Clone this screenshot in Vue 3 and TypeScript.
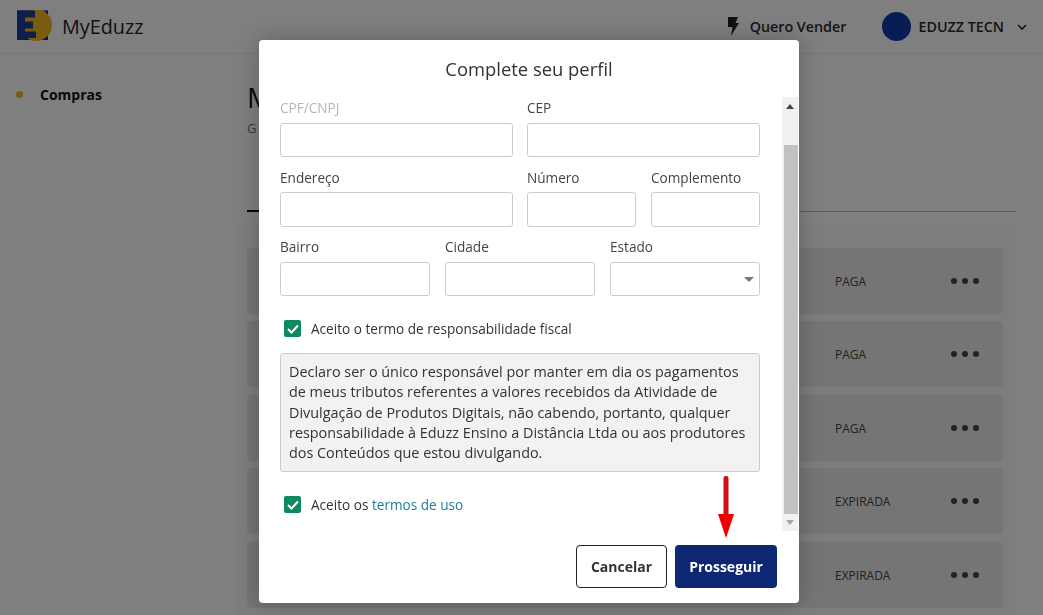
<script setup lang="ts">
interface Purchase {
  id: number
  status: string
}

const purchases: Purchase[] = [
  { id: 1, status: 'PAGA' },
  { id: 2, status: 'PAGA' },
  { id: 3, status: 'PAGA' },
  { id: 4, status: 'EXPIRADA' },
  { id: 5, status: 'EXPIRADA' },
]

const declaration =
  'Declaro ser o único responsável por manter em dia os pagamentos de meus tributos referentes a valores recebidos da Atividade de Divulgação de Produtos Digitais, não cabendo, portanto, qualquer responsabilidade à Eduzz Ensino a Distância Ltda ou aos produtores dos Conteúdos que estou divulgando.'
</script>

<template>
  <div class="page">
    <header class="topbar">
      <div class="brand">
        <svg class="logo" width="36" height="33" viewBox="0 0 36 33">
          <rect x="0" y="0.500" width="31" height="29.500" fill="#0f2a80" />
          <circle cx="19" cy="15" r="16" fill="#f3b81c" />
          <path d="M0 .5h18v7H8v4h8v7H8v3h11v6.500H8V30H0z" fill="#1c3a9c" />
        </svg>
        <span class="brand-name">MyEduzz</span>
      </div>
      <div class="top-actions">
        <div class="sell">
          <svg width="12" height="19" viewBox="0 0 12 19">
            <path d="M1 0h10L8.500 6H12L4 19l1.500-9H1z" fill="#222" />
          </svg>
          <span>Quero Vender</span>
        </div>
        <div class="account">
          <span class="avatar"></span>
          <span class="account-name">EDUZZ TECN</span>
          <svg width="10" height="6" viewBox="0 0 10 6">
            <path d="M1 1l4 4 4-4" fill="none" stroke="#222" stroke-width="1.500" />
          </svg>
        </div>
      </div>
    </header>

    <div class="content">
      <aside class="sidebar">
        <div class="nav-item">
          <span class="nav-dot"></span>
          <span>Compras</span>
        </div>
      </aside>
      <main class="main">
        <h1 class="main-title">M</h1>
        <p class="main-sub">G</p>
        <div class="tabs"><span class="tab-active"></span></div>
        <section class="panel">
          <div v-for="item in purchases" :key="item.id" class="row">
            <span class="row-status">{{ item.status }}</span>
            <span class="row-menu"><i></i><i></i><i></i></span>
          </div>
        </section>
      </main>
    </div>

    <div class="overlay">
      <div class="modal">
        <h2 class="modal-title">Complete seu perfil</h2>

        <div class="modal-body">
          <form class="form">
            <div class="form-row first">
              <label class="field disabled">
                <span>CPF/CNPJ</span>
                <input type="text" />
              </label>
              <label class="field">
                <span>CEP</span>
                <input type="text" />
              </label>
            </div>
            <div class="form-row second">
              <label class="field">
                <span>Endereço</span>
                <input type="text" />
              </label>
              <div class="form-pair">
                <label class="field">
                  <span>Número</span>
                  <input type="text" />
                </label>
                <label class="field">
                  <span>Complemento</span>
                  <input type="text" />
                </label>
              </div>
            </div>
            <div class="form-row thirds">
              <label class="field">
                <span>Bairro</span>
                <input type="text" />
              </label>
              <label class="field">
                <span>Cidade</span>
                <input type="text" />
              </label>
              <label class="field">
                <span>Estado</span>
                <div class="select"><b></b></div>
              </label>
            </div>

            <div class="check check-first">
              <span class="box">
                <svg width="12" height="10" viewBox="0 0 12 10">
                  <path d="M1 5l3.500 3.500L11 1.500" fill="none" stroke="#fff" stroke-width="2" />
                </svg>
              </span>
              <span>Aceito o termo de responsabilidade fiscal</span>
            </div>

            <div class="declaration">{{ declaration }}</div>

            <div class="check check-last">
              <span class="box">
                <svg width="12" height="10" viewBox="0 0 12 10">
                  <path d="M1 5l3.500 3.500L11 1.500" fill="none" stroke="#fff" stroke-width="2" />
                </svg>
              </span>
              <span>Aceito os <a class="link">termos de uso</a></span>
            </div>
          </form>

          <div class="scrollbar">
            <span class="arrow-up"></span>
            <span class="thumb"></span>
            <span class="arrow-down"></span>
          </div>
        </div>

        <footer class="modal-footer">
          <button class="btn btn-cancel">Cancelar</button>
          <button class="btn btn-next">Prosseguir</button>
        </footer>

        <svg class="red-arrow" width="16" height="62" viewBox="0 0 16 62">
          <rect x="5.500" y="0" width="5" height="40" rx="2" fill="#d01010" />
          <path d="M0 38h16L8 62z" fill="#ee0000" />
        </svg>
      </div>
    </div>
  </div>
</template>

<style>
html,
body {
  margin: 0;
  overflow: hidden;
}
</style>

<style scoped>
.page {
  width: 1043px;
  height: 615px;
  overflow: hidden;
  background: #fff;
  color: #2b2b2b;
  font-family: "Open Sans", "Noto Sans", sans-serif;
  font-size: 14px;
}

.topbar {
  height: 53px;
  border-bottom: 1px solid #eee;
  display: flex;
  align-items: center;
  justify-content: space-between;
  padding: 0 16px 0 17px;
}

.brand {
  display: flex;
  align-items: center;
  gap: 9px;
}

.logo {
  display: block;
}

.brand-name {
  font-size: 19.800px;
  color: #222;
}

.top-actions {
  display: flex;
  align-items: center;
  gap: 36px;
  font-size: 14.300px;
}

.sell {
  display: flex;
  align-items: center;
  gap: 11px;
  font-weight: 600;
}

.account {
  display: flex;
  align-items: center;
  font-weight: 600;
}

.avatar {
  width: 29px;
  height: 29px;
  border-radius: 50%;
  background: #133aa8;
  margin-right: 7px;
}

.account-name {
  margin-right: 13px;
}

.content {
  display: flex;
}

.sidebar {
  width: 247px;
  flex-shrink: 0;
  padding-top: 31px;
}

.nav-item {
  display: flex;
  align-items: center;
  padding-left: 16px;
  font-weight: 700;
  color: #111;
}

.nav-dot {
  width: 7px;
  height: 7px;
  border-radius: 50%;
  background: #f3b81c;
  margin-right: 17px;
}

.main {
  flex: 1;
  padding-right: 27px;
}

.main-title {
  margin: 24px 0 0;
  font-size: 28px;
  line-height: 38px;
  font-weight: 400;
  color: #111;
}

.main-sub {
  margin: 3px 0 0;
  font-size: 13px;
  line-height: 18px;
  color: #777;
}

.tabs {
  height: 75px;
  box-sizing: border-box;
  border-bottom: 1px solid #bbb;
  position: relative;
}

.tab-active {
  position: absolute;
  left: 0;
  bottom: -1px;
  width: 60px;
  height: 2px;
  background: #111;
}

.panel {
  margin: 14px 0 0 -11px;
  padding: 21.750px 13px 0 11px;
  background: #fbfbfb;
  height: 400px;
}

.row {
  height: 66px;
  margin-bottom: 7.500px;
  background: #eaeaea;
  border-radius: 4px;
  display: flex;
  align-items: center;
  justify-content: flex-end;
  padding-right: 24px;
  color: #444;
  font-size: 12px;
}

.row-status {
  width: 116px;
  padding-top: 1px;
}

.row-menu {
  display: flex;
  gap: 5px;
}

.row-menu i {
  width: 6px;
  height: 6px;
  border-radius: 50%;
  background: #444;
}

.overlay {
  position: fixed;
  inset: 0;
  background: rgba(0, 0, 0, 0.5);
}

.modal {
  position: absolute;
  left: 259px;
  top: 40px;
  width: 540px;
  height: 563px;
  background: #fff;
  border-radius: 4px;
  box-shadow: 0 0 24px rgba(0, 0, 0, 0.25);
}

.modal-title {
  margin: 0;
  height: 57px;
  font-size: 18.400px;
  line-height: 58px;
  font-weight: 400;
  text-align: center;
  color: #333;
}

.modal-body {
  height: 434px;
  display: flex;
  justify-content: space-between;
}

.form {
  width: 480px;
  margin-left: 21px;
  padding-top: 1px;
}

.form-row {
  display: grid;
  grid-template-columns: 233px 233px;
  column-gap: 14px;
  margin-bottom: 10px;
}

.form-row.first {
  margin-bottom: 11px;
}

.form-row.second .field > span {
  margin-bottom: 4px;
}

.form-row.second .field input {
  height: 35px;
}

.form-row.thirds {
  grid-template-columns: 150px 150px 150px;
  column-gap: 15px;
  margin-bottom: 0;
}

.form-pair {
  display: grid;
  grid-template-columns: 109px 109px;
  column-gap: 15px;
}

.field {
  display: flex;
  flex-direction: column;
  color: #444;
  font-size: 13.600px;
}

.field > span {
  line-height: 20px;
  margin-bottom: 5px;
}

.field.disabled > span {
  color: #b5b5b5;
}

.field input,
.select {
  width: 100%;
  height: 34px;
  box-sizing: border-box;
  border: 1px solid #ccc;
  border-radius: 3px;
  background: #fff;
  padding: 0;
  outline: none;
}

.select {
  position: relative;
}

.select b {
  position: absolute;
  right: 5px;
  top: 14px;
  border-left: 5px solid transparent;
  border-right: 5px solid transparent;
  border-top: 5px solid #777;
}

.check {
  display: flex;
  align-items: center;
  padding-left: 4px;
  color: #333;
  font-size: 13.600px;
}

.check-first {
  margin-top: 23px;
}

.check-last {
  margin-top: 23px;
}

.box {
  width: 17px;
  height: 17px;
  border-radius: 2px;
  background: #0f8a60;
  margin-right: 10px;
  display: flex;
  align-items: center;
  justify-content: center;
}

.link {
  color: #1d7f94;
}

.declaration {
  margin-top: 15px;
  box-sizing: border-box;
  height: 119px;
  padding: 8px 8px 0;
  background: #f2f2f2;
  border: 1px solid #ccc;
  border-radius: 3px;
  font-size: 14.400px;
  line-height: 20.300px;
  color: #333;
}

.scrollbar {
  width: 16px;
  margin-right: 1px;
  background: #f1f1f1;
  display: flex;
  flex-direction: column;
  align-items: flex-end;
  position: relative;
}

.thumb {
  width: 14px;
  height: 369px;
  margin-top: 48px;
  background: #c1c1c1;
}

.arrow-up,
.arrow-down {
  position: absolute;
  left: 4px;
  border-left: 4px solid transparent;
  border-right: 4px solid transparent;
}

.arrow-up {
  top: 7px;
  border-bottom: 5px solid #444;
}

.arrow-down {
  bottom: 6px;
  border-top: 5px solid #a5a5a5;
}

.modal-footer {
  display: flex;
  justify-content: flex-end;
  gap: 8px;
  padding: 14px 22px 0 0;
}

.btn {
  height: 43px;
  border-radius: 4px;
  font-family: inherit;
  font-size: 14px;
  font-weight: 700;
  cursor: pointer;
}

.btn-cancel {
  width: 91px;
  background: #fff;
  border: 1px solid #222;
  color: #333;
}

.btn-next {
  width: 102px;
  background: #0d2772;
  border: none;
  color: #fff;
}

.red-arrow {
  position: absolute;
  left: 459px;
  top: 436px;
}
</style>
